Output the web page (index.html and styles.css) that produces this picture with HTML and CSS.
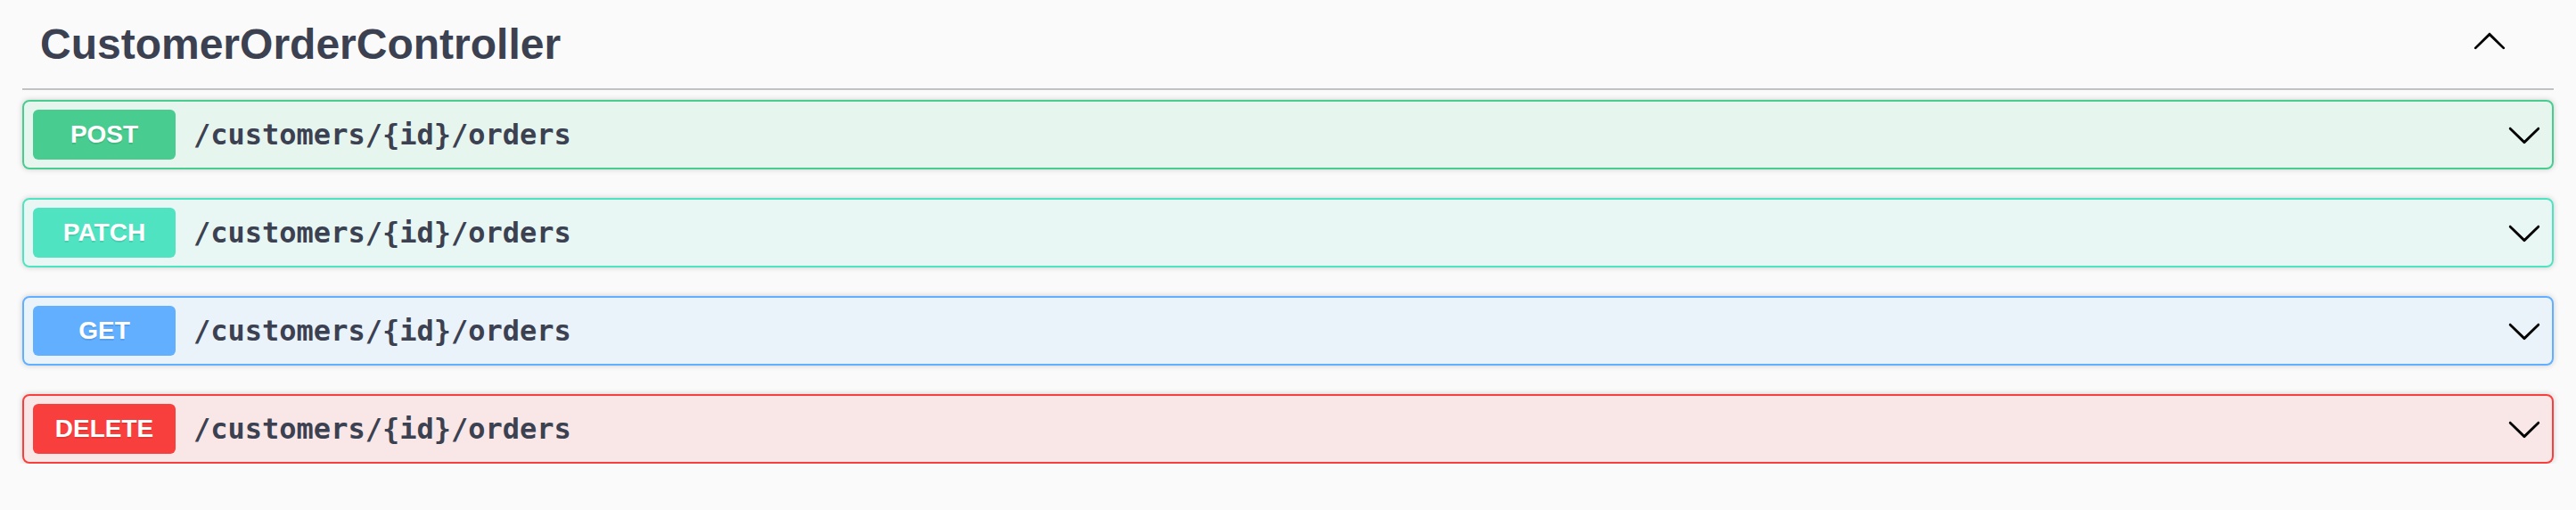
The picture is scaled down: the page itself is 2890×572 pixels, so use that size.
FILE: index.html
```html
<!DOCTYPE html>
<html lang="en">
<head>
<meta charset="utf-8">
<title>CustomerOrderController</title>
<link rel="stylesheet" href="styles.css">
</head>
<body>
<div class="section">
  <div class="tag">
    <h3 class="tag-title">CustomerOrderController</h3>
    <button class="toggle toggle-up" aria-label="Collapse">
      <svg viewBox="0 0 20 20" width="40" height="40"><path d="M17.418 14.908c.272.268.709.268.979 0s.271-.701 0-.969l-7.908-7.83c-.27-.268-.707-.268-.979 0l-7.908 7.83c-.27.268-.27.701 0 .969.271.268.709.268.979 0L10 7.767l7.418 7.141z"/></svg>
    </button>
  </div>
  <div class="ops">
    <div class="op op-post">
      <span class="method">POST</span>
      <span class="path">/customers/{id}/orders</span>
      <svg class="arrow" viewBox="0 0 20 20" width="40" height="40"><path d="M17.418 6.109c.272-.268.709-.268.979 0s.271.701 0 .969l-7.908 7.83c-.27.268-.707.268-.979 0l-7.908-7.83c-.27-.268-.27-.701 0-.969.271-.268.709-.268.979 0L10 13.25l7.418-7.141z"/></svg>
    </div>
    <div class="op op-patch">
      <span class="method">PATCH</span>
      <span class="path">/customers/{id}/orders</span>
      <svg class="arrow" viewBox="0 0 20 20" width="40" height="40"><path d="M17.418 6.109c.272-.268.709-.268.979 0s.271.701 0 .969l-7.908 7.83c-.27.268-.707.268-.979 0l-7.908-7.83c-.27-.268-.27-.701 0-.969.271-.268.709-.268.979 0L10 13.25l7.418-7.141z"/></svg>
    </div>
    <div class="op op-get">
      <span class="method">GET</span>
      <span class="path">/customers/{id}/orders</span>
      <svg class="arrow" viewBox="0 0 20 20" width="40" height="40"><path d="M17.418 6.109c.272-.268.709-.268.979 0s.271.701 0 .969l-7.908 7.83c-.27.268-.707.268-.979 0l-7.908-7.83c-.27-.268-.27-.701 0-.969.271-.268.709-.268.979 0L10 13.25l7.418-7.141z"/></svg>
    </div>
    <div class="op op-delete">
      <span class="method">DELETE</span>
      <span class="path">/customers/{id}/orders</span>
      <svg class="arrow" viewBox="0 0 20 20" width="40" height="40"><path d="M17.418 6.109c.272-.268.709-.268.979 0s.271.701 0 .969l-7.908 7.83c-.27.268-.707.268-.979 0l-7.908-7.83c-.27-.268-.27-.701 0-.969.271-.268.709-.268.979 0L10 13.25l7.418-7.141z"/></svg>
    </div>
  </div>
</div>
</body>
</html>
```

FILE: styles.css
```css
html, body {
  margin: 0;
  padding: 0;
  background: #fafafa;
}
body {
  font-family: "Liberation Sans", Arial, sans-serif;
  color: #3b4151;
}
.section {
  margin: 0 25px;
}
.tag {
  display: flex;
  align-items: center;
  justify-content: space-between;
  height: 99px;
  padding: 0 52px 0 20px;
  border-bottom: 2px solid rgba(59, 65, 81, 0.3);
  margin-bottom: 11px;
}
.tag-title {
  margin: 0;
  font-size: 48px;
  font-weight: 700;
  color: #3b4151;
}
.toggle {
  display: flex;
  padding: 0;
  margin: 0 0 9px 0;
  border: none;
  background: none;
  width: 40px;
  height: 40px;
}
.toggle svg, .arrow {
  fill: #000;
  display: block;
}
.ops {
  display: flex;
  flex-direction: column;
  gap: 32px;
}
.op {
  display: flex;
  align-items: center;
  height: 74px;
  padding: 0 10px;
  border: 2px solid;
  border-radius: 8px;
  box-shadow: 0 0 6px rgba(0, 0, 0, 0.19);
}
.method {
  display: flex;
  align-items: center;
  justify-content: center;
  width: 160px;
  height: 56px;
  border-radius: 6px;
  color: #fff;
  font-size: 28px;
  font-weight: 700;
  text-shadow: 0 2px 0 rgba(0, 0, 0, 0.1);
  flex-shrink: 0;
}
.path {
  flex: 1;
  padding: 0 20px;
  font-family: "DejaVu Sans Mono", monospace;
  font-size: 32px;
  font-weight: 700;
  color: #3b4151;
}
.arrow {
  flex-shrink: 0;
  margin-right: 1px;
}
.op-post { border-color: #49cc90; background: rgba(73, 204, 144, 0.1); }
.op-post .method { background: #49cc90; }
.op-patch { border-color: #50e3c2; background: rgba(80, 227, 194, 0.1); }
.op-patch .method { background: #50e3c2; }
.op-get { border-color: #61affe; background: rgba(97, 175, 254, 0.1); }
.op-get .method { background: #61affe; }
.op-delete { border-color: #f93e3e; background: rgba(249, 62, 62, 0.1); }
.op-delete .method { background: #f93e3e; }
```
